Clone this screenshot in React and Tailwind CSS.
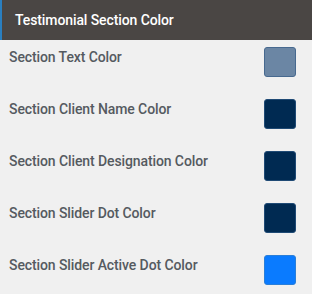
export default function App() {
  const rows = [
    { label: "Section Text Color", color: "bg-[#6b86a4]", border: "border-[#47698f]" },
    { label: "Section Client Name Color", color: "bg-[#002a52]", border: "border-[#1f4a75]" },
    { label: "Section Client Designation Color", color: "bg-[#002a52]", border: "border-[#1f4a75]" },
    { label: "Section Slider Dot Color", color: "bg-[#002a52]", border: "border-[#1f4a75]" },
    { label: "Section Slider Active Dot Color", color: "bg-[#0a7bff]", border: "border-[#2a7fd9]" },
  ];

  return (
    <div className="w-[312px] h-[294px] bg-[#f0f0f0] overflow-hidden font-['Roboto',sans-serif]">
      <div className="h-[40px] bg-[#4a4644] border-l-2 border-[#2a7fc0] flex items-center pl-[13px]">
        <span className="text-white text-[14px] font-medium tracking-[-0.1px]">Testimonial Section Color</span>
      </div>
      <div className="flex flex-col">
        {rows.map((r, i) => (
          <div key={i} className="h-[52px] flex items-start justify-between pl-[9px] pr-[16px] pt-[7px]">
            <span className="text-[14px] leading-[20px] font-medium text-[#555a60] tracking-[-0.1px]">{r.label}</span>
            <div className={`w-[32px] h-[30px] rounded-[3px] border ${r.color} ${r.border}`} />
          </div>
        ))}
      </div>
    </div>
  );
}
